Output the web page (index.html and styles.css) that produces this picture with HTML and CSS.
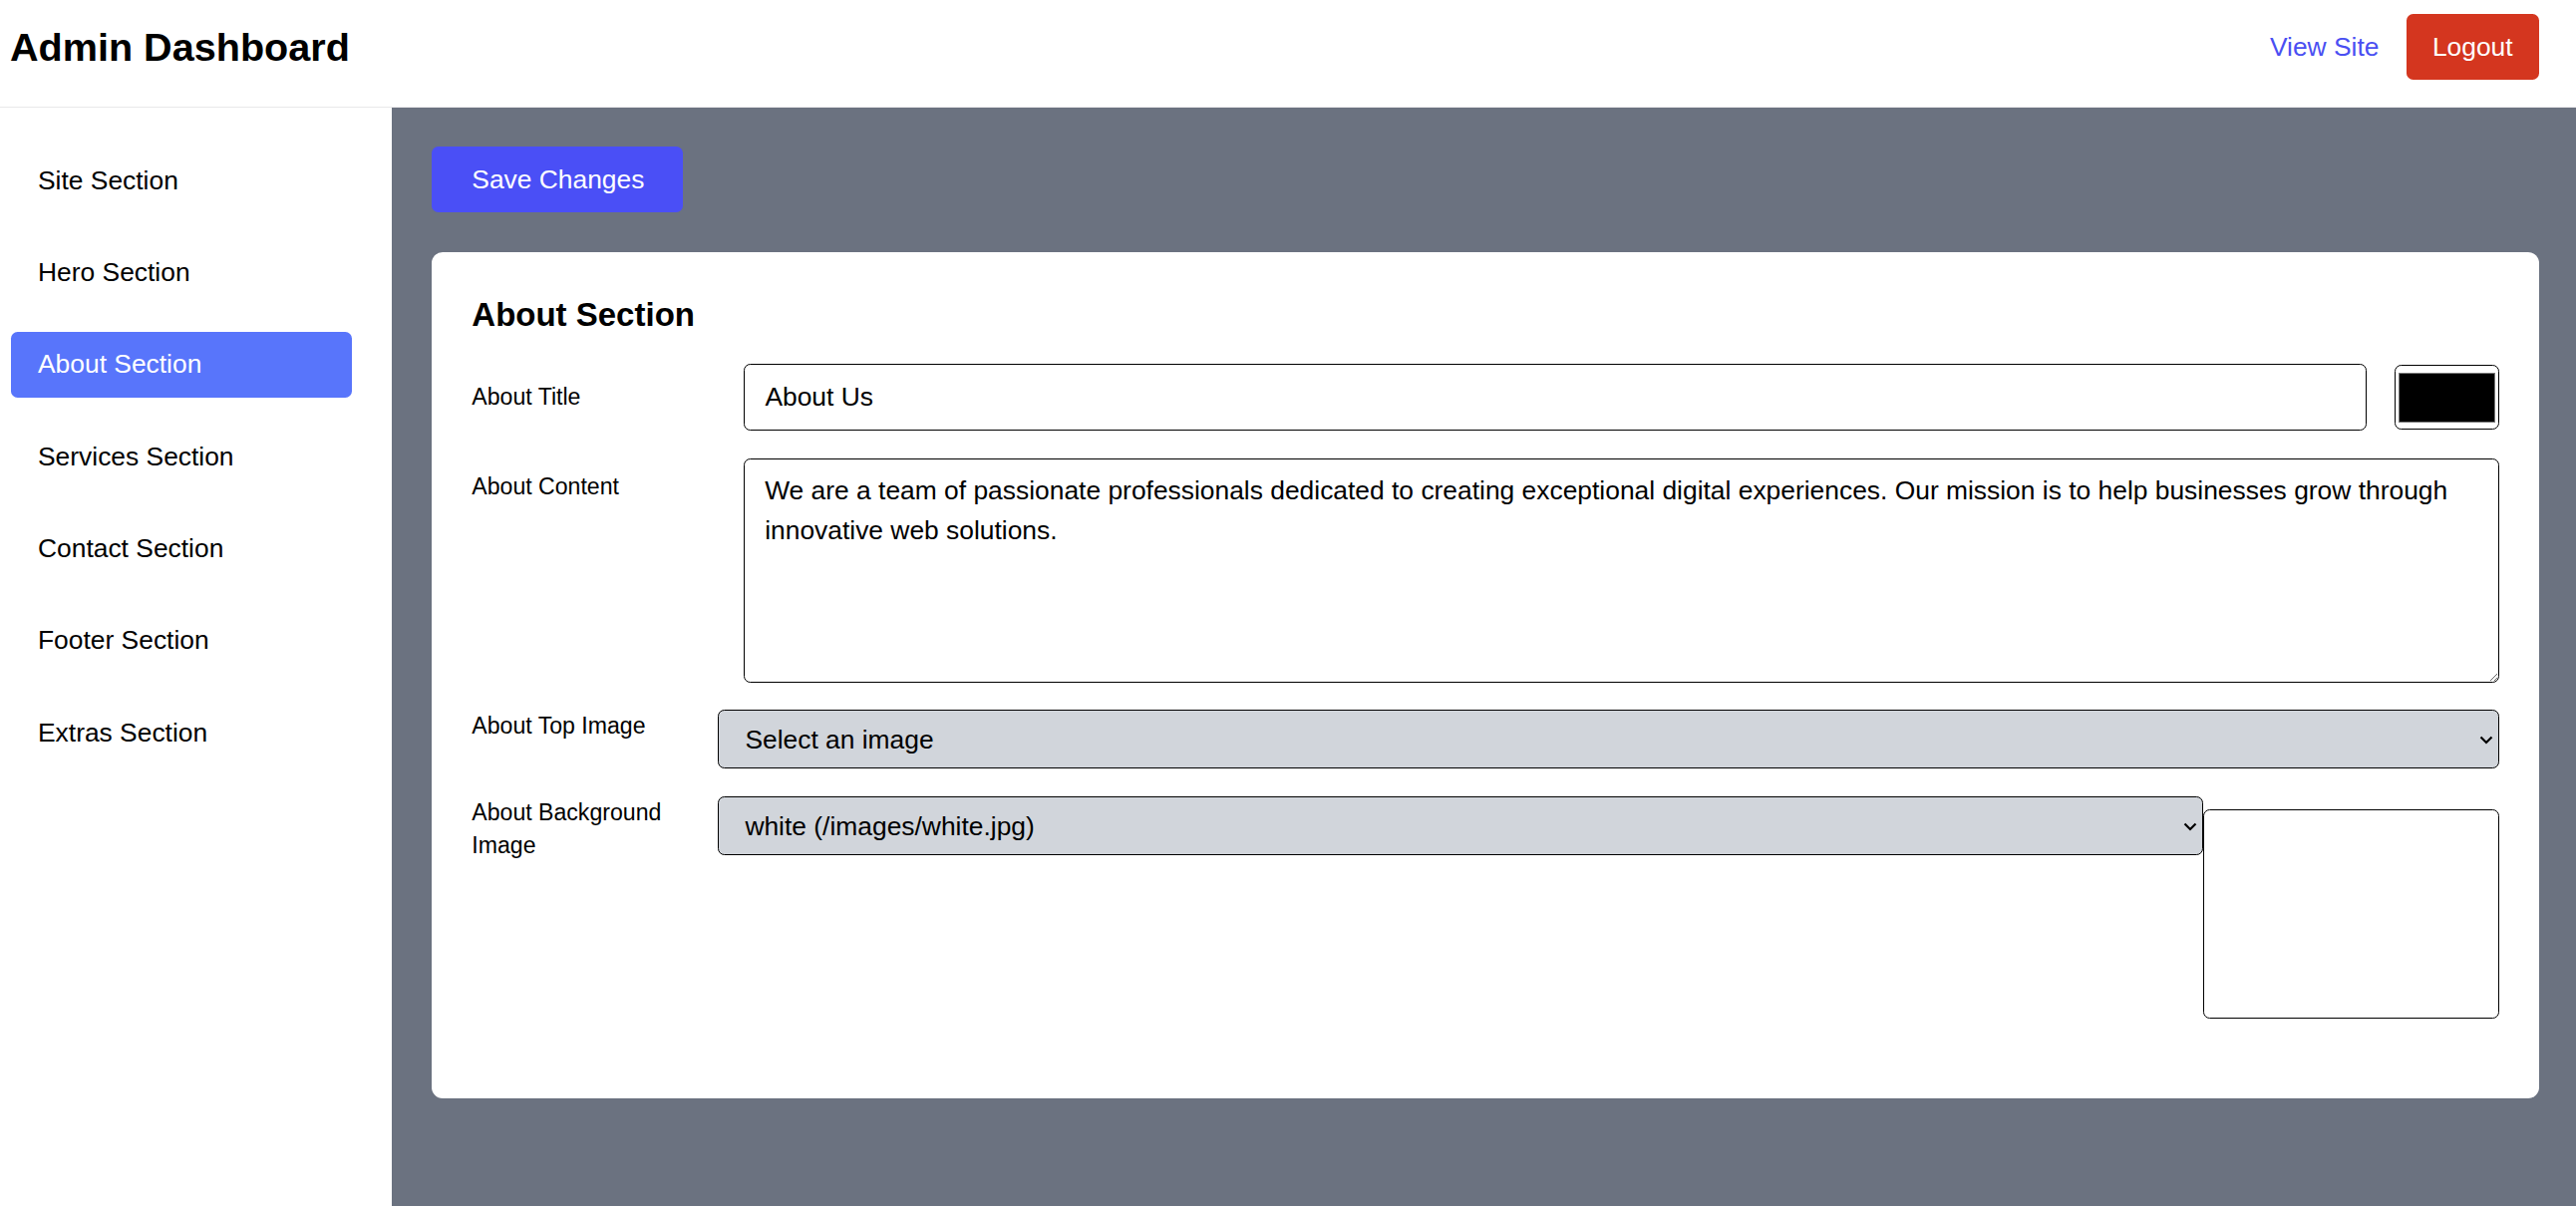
FILE: index.html
```html
<!DOCTYPE html>
<html lang="en">
<head>
<meta charset="utf-8">
<title>Admin Dashboard</title>
<link rel="stylesheet" href="styles.css">
</head>
<body>
<header class="topbar">
  <h1 class="brand">Admin Dashboard</h1>
  <div class="top-actions">
    <a class="view-site" href="#">View Site</a>
    <button class="logout" type="button">Logout</button>
  </div>
</header>
<div class="layout">
  <nav class="sidebar">
    <a class="nav-item" href="#">Site Section</a>
    <a class="nav-item" href="#">Hero Section</a>
    <a class="nav-item active" href="#">About Section</a>
    <a class="nav-item" href="#">Services Section</a>
    <a class="nav-item" href="#">Contact Section</a>
    <a class="nav-item" href="#">Footer Section</a>
    <a class="nav-item" href="#">Extras Section</a>
  </nav>
  <main class="main">
    <button class="save" type="button">Save Changes</button>
    <section class="card">
      <h2 class="card-title">About Section</h2>
      <div class="row row-title">
        <label class="field-label">About Title</label>
        <input class="text-input" type="text" value="About Us">
        <input class="color-input" type="color" value="#000000">
      </div>
      <div class="row row-content">
        <label class="field-label label-pad">About Content</label>
        <textarea class="textarea">We are a team of passionate professionals dedicated to creating exceptional digital experiences. Our mission is to help businesses grow through innovative web solutions.</textarea>
      </div>
      <div class="row row-top">
        <label class="field-label">About Top Image</label>
        <div class="select-wrap">
          <select class="select"><option>Select an image</option></select>
          <svg class="chev" width="14" height="9" viewBox="0 0 14 9"><path d="M1.5 1.5 L7 7 L12.5 1.5" fill="none" stroke="#000" stroke-width="2.2"/></svg>
        </div>
      </div>
      <div class="row row-bg">
        <label class="field-label">About Background Image</label>
        <div class="select-wrap">
          <select class="select"><option>white (/images/white.jpg)</option></select>
          <svg class="chev" width="14" height="9" viewBox="0 0 14 9"><path d="M1.5 1.5 L7 7 L12.5 1.5" fill="none" stroke="#000" stroke-width="2.2"/></svg>
        </div>
        <div class="preview"></div>
      </div>
    </section>
  </main>
</div>
</body>
</html>
```
FILE: styles.css
```css
* { box-sizing: border-box; }
html, body { margin: 0; height: 100%; }
body {
  font-family: "Liberation Sans", Arial, sans-serif;
  color: #000;
  display: flex;
  flex-direction: column;
  overflow: hidden;
  background: #fff;
}
.topbar {
  height: 108px;
  flex: none;
  display: flex;
  justify-content: space-between;
  align-items: flex-start;
  padding: 14px 37px 0 10px;
  border-bottom: 1px solid #e8e8ea;
}
.brand {
  margin: 0;
  height: 66px;
  display: flex;
  align-items: center;
  font-size: 39.6px;
  font-weight: 700;
}
.top-actions {
  display: flex;
  align-items: center;
  gap: 27px;
  height: 66px;
}
.view-site {
  color: #4a4ff2;
  text-decoration: none;
  font-size: 26.4px;
}
.logout {
  height: 66px;
  padding: 0 26.4px;
  border: 0;
  border-radius: 6.6px;
  background: #d4361f;
  color: #fff;
  font-family: inherit;
  font-size: 26.4px;
}
.layout {
  flex: 1;
  display: flex;
  min-height: 0;
}
.sidebar {
  width: 393px;
  flex: none;
  background: #fff;
  padding: 40px 0 0 11px;
  display: flex;
  flex-direction: column;
  gap: 26.4px;
}
.nav-item {
  width: 342px;
  height: 66px;
  display: flex;
  align-items: center;
  padding-left: 27px;
  border-radius: 6.6px;
  font-size: 26.4px;
  color: #000;
  text-decoration: none;
}
.nav-item.active {
  background: #5875fb;
  color: #fff;
}
.main {
  flex: 1;
  background: #6b7280;
  padding: 39.3px 37.3px 0 40.3px;
}
.save {
  display: block;
  height: 65.4px;
  width: 251.4px;
  border: 0;
  border-radius: 6.6px;
  background: #4a4ff6;
  color: #fff;
  font-family: inherit;
  font-size: 26.4px;
  text-align: left;
  padding: 1px 0 0 40px;
}
.card {
  margin-top: 40.6px;
  background: #fff;
  border-radius: 11px;
  padding: 39.6px 39.6px 79.4px 40px;
}
.card-title {
  margin: 0 0 26.4px;
  font-size: 33px;
  line-height: 46.2px;
  font-weight: 700;
}
.row {
  display: flex;
  align-items: flex-start;
}
.row-title { align-items: center; }
.row-content { margin-top: 27.2px; }
.row-top { margin-top: 27.3px; }
.row-bg { margin-top: 28.3px; }
.field-label {
  width: 246.7px;
  flex: none;
  font-size: 23.1px;
  line-height: 33px;
}
.label-pad { padding-top: 12.5px; }
.text-input {
  flex: 1;
  min-width: 0;
  height: 67px;
  margin-left: 26.4px;
  margin-right: 27.3px;
  padding: 0 20px;
  border: 1px solid #000;
  border-radius: 6.6px;
  font-family: inherit;
  font-size: 26.4px;
  color: #000;
  background: #fff;
  outline: none;
}
.color-input {
  flex: none;
  width: 105.4px;
  height: 65px;
  padding: 0;
  border: 1px solid #000;
  border-radius: 6.6px;
  background: #fff;
  cursor: pointer;
}
.color-input::-webkit-color-swatch-wrapper { padding: 6.4px 3.4px; }
.color-input::-webkit-color-swatch { border: 1px solid #777; border-radius: 0; }
.textarea {
  flex: 1;
  min-width: 0;
  height: 225.5px;
  margin-left: 26.4px;
  padding: 12.8px 19.8px;
  border: 1px solid #000;
  border-radius: 6.6px;
  font-family: inherit;
  font-size: 26.4px;
  line-height: 39.6px;
  color: #000;
  background: #fff;
  outline: none;
}
.select-wrap {
  flex: 1;
  min-width: 0;
  position: relative;
}
.select {
  display: block;
  width: 100%;
  height: 58.7px;
  -webkit-appearance: none;
  appearance: none;
  background: #d1d5db;
  border: 1px solid #000;
  border-radius: 6.6px;
  padding: 0 40px 0 26.4px;
  font-family: inherit;
  font-size: 26.4px;
  color: #000;
}
.chev {
  position: absolute;
  right: 6px;
  top: 50%;
  transform: translateY(-45%);
  pointer-events: none;
}
.preview {
  flex: none;
  width: 297px;
  height: 210px;
  margin-top: 13px;
  border: 1px solid #000;
  border-radius: 6.6px;
  background: #fff;
}
```
